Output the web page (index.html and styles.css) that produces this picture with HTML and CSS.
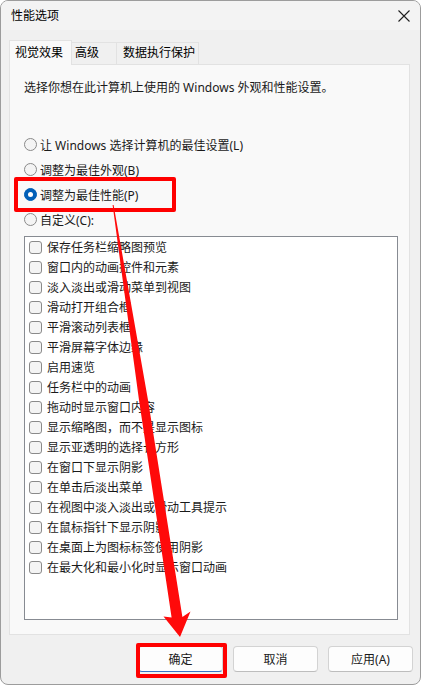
FILE: index.html
```html
<!DOCTYPE html>
<html lang="zh-CN">
<head>
    <meta charset="UTF-8">
    <title>性能选项</title>
    <link rel="stylesheet" href="styles.css">
</head>
<body>
    <div class="window">
        <div class="titlebar">
            <span class="title">性能选项</span>
            <svg class="close" width="12" height="12" viewBox="0 0 12 12">
                <path d="M0.5 0.5 L11.5 11.5 M11.5 0.5 L0.5 11.5" stroke="#1f1f1f" stroke-width="1.1" fill="none"/>
            </svg>
        </div>

        <div class="tabs">
            <div class="tab tab-active">视觉效果</div>
            <div class="tab tab-adv">高级</div>
            <div class="tab tab-dep">数据执行保护</div>
        </div>

        <div class="panel">
            <p class="desc">选择你想在此计算机上使用的 Windows 外观和性能设置。</p>

            <div class="radios">
                <div class="radio"><span class="dot"></span>让 Windows 选择计算机的最佳设置(L)</div>
                <div class="radio"><span class="dot"></span>调整为最佳外观(B)</div>
                <div class="radio"><span class="dot dot-on"></span>调整为最佳性能(P)</div>
                <div class="radio"><span class="dot"></span>自定义(C):</div>
            </div>

            <div class="listbox">
                <div class="check"><span class="box"></span>保存任务栏缩略图预览</div>
                <div class="check"><span class="box"></span>窗口内的动画控件和元素</div>
                <div class="check"><span class="box"></span>淡入淡出或滑动菜单到视图</div>
                <div class="check"><span class="box"></span>滑动打开组合框</div>
                <div class="check"><span class="box"></span>平滑滚动列表框</div>
                <div class="check"><span class="box"></span>平滑屏幕字体边缘</div>
                <div class="check"><span class="box"></span>启用速览</div>
                <div class="check"><span class="box"></span>任务栏中的动画</div>
                <div class="check"><span class="box"></span>拖动时显示窗口内容</div>
                <div class="check"><span class="box"></span>显示缩略图，而不是显示图标</div>
                <div class="check"><span class="box"></span>显示亚透明的选择长方形</div>
                <div class="check"><span class="box"></span>在窗口下显示阴影</div>
                <div class="check"><span class="box"></span>在单击后淡出菜单</div>
                <div class="check"><span class="box"></span>在视图中淡入淡出或滑动工具提示</div>
                <div class="check"><span class="box"></span>在鼠标指针下显示阴影</div>
                <div class="check"><span class="box"></span>在桌面上为图标标签使用阴影</div>
                <div class="check"><span class="box"></span>在最大化和最小化时显示窗口动画</div>
            </div>
        </div>

        <div class="footer">
            <button class="btn btn-default">确定</button>
            <button class="btn">取消</button>
            <button class="btn">应用(A)</button>
        </div>

        <!-- annotations drawn over the dialog -->
        <div class="mark mark-radio"></div>
        <div class="mark mark-ok"></div>
        <svg class="arrow" width="421" height="685" viewBox="0 0 421 685">
            <polygon fill="#ff0a0a" points="113.6,205 130.4,300 148,400 182.4,617 190.5,611.5 180,637 163.5,616.5 171.6,617.6 139,400 125.4,300 112.6,205"/>
        </svg>
    </div>
</body>
</html>
```

FILE: styles.css
```css
body {
    margin: 0;
    background: #ffffff;
    font-family: "Segoe UI", "Noto Sans", "Noto Sans CJK SC", sans-serif;
    font-size: 12px;
    color: #1a1a1a;
}

.window {
    position: relative;
    width: 421px;
    height: 685px;
    box-sizing: border-box;
    border: 1px solid #9c9c9c;
    border-radius: 8px;
    background: #f0f0f0;
    overflow: hidden;
}

.titlebar {
    height: 29px;
    display: flex;
    align-items: center;
    justify-content: space-between;
    padding: 0 10px 0 10px;
    background: #f3f3f3;
}

.title { line-height: 16px; color: #000; }
.close { margin-right: 0; }

/* tabs */
.tabs {
    display: flex;
    align-items: flex-end;
    height: 24px;
    margin: 10px 0 0 8px;
}

.tab {
    box-sizing: border-box;
    height: 22px;
    line-height: 20px;
    border: 1px solid #e2e2e2;
    border-bottom: none;
    background: #f0f0f0;
    color: #000;
    white-space: nowrap;
}

.tab-active {
    position: relative;
    z-index: 1;
    width: 63px;
    height: 25px;
    line-height: 23px;
    margin-bottom: -1px;
    padding-left: 5px;
    background: #f9f9f9;
}

.tab-adv { width: 45px; padding-left: 3px; border-left: none; }
.tab-dep { width: 82px; padding-left: 6px; border-left: none; }

/* panel */
.panel {
    box-sizing: border-box;
    height: 571px;
    margin: 0 10px 0 8px;
    padding: 15px 12px 0 14px;
    border: 1px solid #e2e2e2;
    background: #f9f9f9;
}

.desc {
    margin: 0;
    line-height: 16px;
    white-space: nowrap;
}

.radios { margin-top: 36px; }

.radio {
    display: flex;
    align-items: center;
    gap: 3px;
    height: 25px;
    white-space: nowrap;
}

.dot {
    display: flex;
    align-items: center;
    justify-content: center;
    width: 13px;
    height: 13px;
    box-sizing: border-box;
    border: 1px solid #8a8a8a;
    border-radius: 50%;
    background: #f4f4f4;
}

.dot-on {
    border-color: #005fb8;
    background: #005fb8;
}

.dot-on::after {
    content: "";
    width: 5px;
    height: 5px;
    border-radius: 50%;
    background: #ffffff;
}

.listbox {
    box-sizing: border-box;
    width: 374px;
    height: 384px;
    margin-top: 4px;
    border: 1px solid #878b92;
    background: #ffffff;
}

.check {
    display: flex;
    align-items: center;
    gap: 5px;
    height: 20px;
    padding-left: 4px;
    white-space: nowrap;
}

.box {
    width: 13px;
    height: 13px;
    box-sizing: border-box;
    border: 1px solid #8a8a8a;
    border-radius: 3px;
    background: #f4f4f4;
    flex-shrink: 0;
}

/* buttons */
.footer {
    display: flex;
    justify-content: flex-end;
    gap: 10px;
    margin-top: 11px;
    padding-right: 7px;
}

.btn {
    width: 85px;
    height: 26px;
    padding: 0;
    border: 1px solid #d3d3d3;
    border-bottom-color: #bdbdbd;
    border-radius: 4px;
    background: #fdfdfd;
    font-family: inherit;
    font-size: 12px;
    color: #1a1a1a;
}

.btn-default { border-bottom-color: #3a74c4; }

/* red annotations */
.mark {
    position: absolute;
    box-sizing: border-box;
    border: 4px solid #ff0000;
    border-radius: 2px;
}

.mark-radio { left: 13px; top: 176px; width: 162px; height: 35px; }
.mark-ok { left: 135px; top: 642px; width: 91px; height: 35px; }

.arrow {
    position: absolute;
    left: -1px;
    top: -1px;
}
```
